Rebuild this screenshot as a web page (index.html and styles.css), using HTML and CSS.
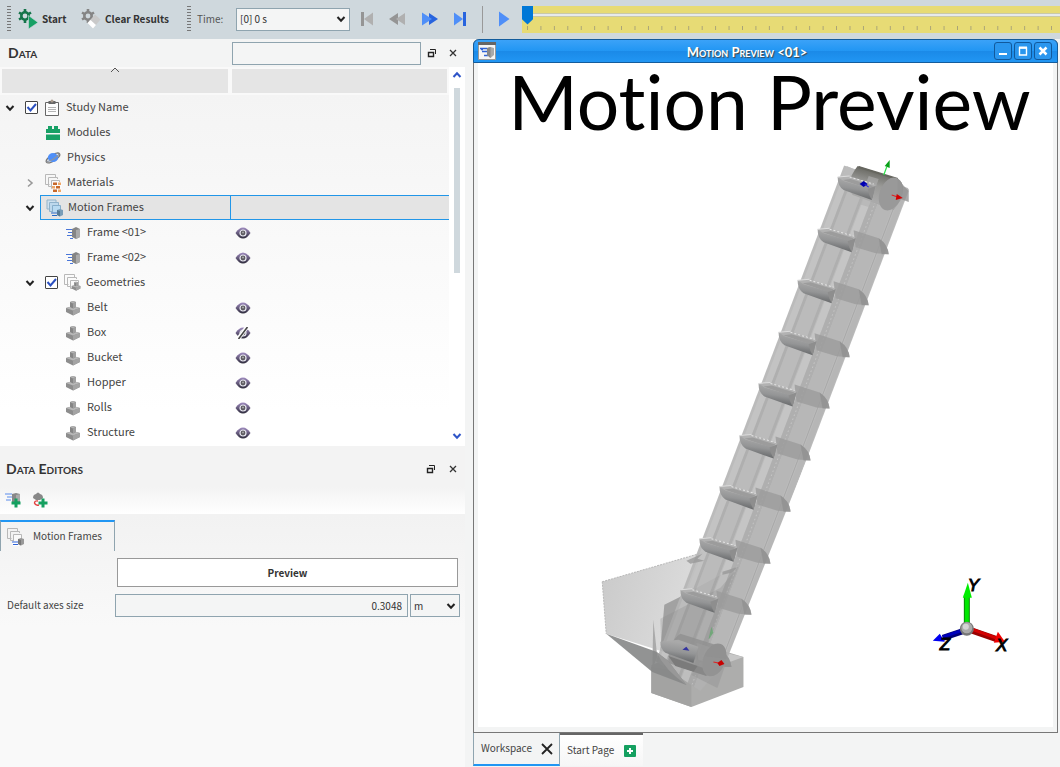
FILE: index.html
```html
<!DOCTYPE html>
<html lang="en">
<head>
<meta charset="utf-8">
<title>Motion Preview</title>
<link rel="stylesheet" href="styles.css">
</head>
<body>
<svg class="defs" aria-hidden="true">
  <defs>
    <linearGradient id="g-eye" x1="0" y1="0" x2="0" y2="1"><stop offset="0" stop-color="#a08cc0"/><stop offset="1" stop-color="#2e2c3c"/></linearGradient>
    <symbol id="i-eye" viewBox="0 0 16 12"><path d="M.500 6Q4 .500 8 .500T15.500 6Q12 11.500 8 11.500T.500 6Z" fill="url(#g-eye)"/><circle cx="8" cy="6" r="3" fill="#5c5a60" stroke="#e8e8f0" stroke-width="1.200"/><circle cx="8" cy="5.500" r="1" fill="#aaa"/></symbol>
    <symbol id="i-eye-off" viewBox="0 0 16 12"><path d="M.500 6Q4 .500 8 .500T15.500 6Q12 11.500 8 11.500T.500 6Z" fill="url(#g-eye)"/><circle cx="8" cy="6" r="3" fill="#5c5a60" stroke="#e8e8f0" stroke-width="1.200"/><path d="M3 12L12 0" stroke="#fff" stroke-width="4"/><path d="M3.500 12L12.500 0" stroke="#444" stroke-width="1.600"/></symbol>
    <symbol id="i-down" viewBox="0 0 10 8"><path d="M1.500 2L5 5.800L8.500 2" fill="none" stroke="currentColor" stroke-width="2"/></symbol>
    <symbol id="i-right" viewBox="0 0 8 10"><path d="M2 1.500L6 5L2 8.500" fill="none" stroke="#999" stroke-width="1.600"/></symbol>
    <symbol id="i-part" viewBox="0 0 16 16"><path d="M1 8L8 6L15 8V12L8 15.500L1 12Z" fill="#8d8d8d"/><path d="M1 8L8 6L15 8L8 10.500Z" fill="#b8b8b8"/><path d="M8 10.500L15 8V12L8 15.500Z" fill="#a4a4a4"/><path d="M5 2L8 1L11 2V7L8 8.500L5 7Z" fill="#858585"/><path d="M5 2L8 1L11 2L8 3.500Z" fill="#b2b2b2"/><path d="M8 3.500L11 2V7L8 8.500Z" fill="#a0a0a0"/></symbol>
    <symbol id="i-frame" viewBox="0 0 16 14"><path d="M1 3.500H7M3 6.500H7M2 9.500H7M5 12.500H8" stroke="#4a76d8" stroke-width="1.200"/><path d="M7 3L11 1L15 3V11L11 13L7 11Z" fill="#858585"/><path d="M11 4L15 3V11L11 13Z" fill="#aaa"/></symbol>
    <symbol id="i-stack" viewBox="0 0 18 18"><path d="M4.500 10.500H.500V.500H10.500V3M7.500 12.500H3.500V3.500H12.500V5" fill="none" stroke="#b8b8b8"/><path d="M6.500 14.500V6.500H14.500V14.500Z" fill="#fafafa" stroke="#b8b8b8"/></symbol>
    <symbol id="i-motion" viewBox="0 0 18 18"><use href="#i-stack" width="18" height="18"/><path d="M5 14.500H12M6 17H12" stroke="#fff" stroke-width="2.500"/><path d="M5 14H11M6 16.500H11" stroke="#2f63d8" stroke-width="1.200"/><path d="M11 11L14 10L17 11V16L14 17.500L11 16Z" fill="#999"/><path d="M11 11L14 12V17.500L11 16Z" fill="#777"/></symbol>
    <symbol id="i-motion-sel" viewBox="0 0 18 18"><path d="M1 1H10V10H1Z" fill="#cfe1ee" stroke="#94b4ca"/><path d="M3.500 3.500H12.500V12.500H3.500Z" fill="#bdd8ec" stroke="#8fb2cb"/><path d="M6.500 6.500H14.500V14.500H6.500Z" fill="#b8daf1" stroke="#86aecb"/><path d="M5 14.500H12M6 17H12" stroke="#e5e5e5" stroke-width="2.500"/><path d="M5 14H11M6 16.500H11" stroke="#2469c8" stroke-width="1.200"/><path d="M11 11L14 10L17 11V16L14 17.500L11 16Z" fill="#789db8"/><path d="M11 11L14 12V17.500L11 16Z" fill="#547a96"/></symbol>
    <symbol id="i-float" viewBox="0 0 10 10"><path d="M1.500 4.500H6.500V8.500H1.500Z" fill="none" stroke="#222" stroke-width="1.400"/><path d="M3 1.500H8.500V6" fill="none" stroke="#222"/></symbol>
    <symbol id="i-close" viewBox="0 0 10 10"><path d="M2 2L8 8M8 2L2 8" stroke="#333" stroke-width="1.300"/></symbol>
    <symbol id="i-plus" viewBox="0 0 10 10"><path d="M5 .500V9.500M.500 5H9.500" stroke="#15a060" stroke-width="3"/></symbol>
    <symbol id="i-gear" viewBox="0 0 14 14"><circle cx="7" cy="7" r="3.700" fill="none" stroke="currentColor" stroke-width="2.600"/><path d="M7 0V3M7 11V14M1 3.500L3.500 5M10.500 9L13 10.500M1 10.500L3.500 9M10.500 5L13 3.500" stroke="currentColor" stroke-width="2.600"/></symbol>
  </defs>
</svg>

<header class="toolbar">
  <span class="grip"></span>
  <button class="tool tool-start" type="button">
    <svg width="20" height="20" viewBox="0 0 20 20"><use href="#i-gear" width="14" height="14" color="#15744a"/><path d="M10.500 6.500L20 13.500L10.500 20Z" fill="#17a065" stroke="#cfd8dd" stroke-width=".600"/></svg>
    Start
  </button>
  <button class="tool tool-clear" type="button">
    <svg width="20" height="20" viewBox="0 0 20 20"><use href="#i-gear" width="14" height="14" color="#858585"/><path d="M6.500 14L14 5.500L19.500 10.500L12 19.500Z" fill="#c9c9c9"/><path d="M6.500 14L9.500 11L15 16L12 19.500Z" fill="#fff"/></svg>
    Clear Results
  </button>
  <span class="grip"></span>
  <label class="time-label" for="time">Time:</label>
  <select class="field time-select" id="time"><option>[0] 0 s</option></select>
  <div class="transport">
    <button class="bare" type="button" aria-label="First"><svg width="14" height="16" viewBox="0 0 14 16"><path d="M1 1H4V15H1Z" fill="#959595"/><path d="M13 1.500V14.500L4 8Z" fill="#b0b0b0"/></svg></button>
    <button class="bare" type="button" aria-label="Back"><svg width="18" height="16" viewBox="0 0 18 16"><path d="M10 2V14L1 8Z" fill="#959595"/><path d="M17 2V14L8 8Z" fill="#b0b0b0"/></svg></button>
    <button class="bare" type="button" aria-label="Forward"><svg width="18" height="16" viewBox="0 0 18 16"><path d="M8 2V14L17 8Z" fill="#2864de"/><path d="M1 1.500V14.500L11 8Z" fill="#4f8ff8"/></svg></button>
    <button class="bare" type="button" aria-label="Last"><svg width="14" height="16" viewBox="0 0 14 16"><path d="M10 1H13V15H10Z" fill="#2864de"/><path d="M1 1.500V14.500L10 8Z" fill="#4f8ff8"/></svg></button>
  </div>
  <span class="rule"></span>
  <button class="bare play" type="button" aria-label="Play"><svg width="12" height="16" viewBox="0 0 12 16"><path d="M1 .500V15.500L11.500 8Z" fill="#4f8ff8"/></svg></button>
  <input class="timeline" type="range" min="0" max="40" value="0" aria-label="Timeline">
</header>

<div class="body">
  <aside class="side">
    <section class="data">
      <div class="panel-head">
        <h2 class="panel-title">Data</h2>
        <input class="field search" type="text" aria-label="Filter data">
        <button class="bare" type="button" aria-label="Float"><svg width="10" height="10"><use href="#i-float"/></svg></button>
        <button class="bare" type="button" aria-label="Close"><svg width="10" height="10"><use href="#i-close"/></svg></button>
      </div>
      <div class="tree-wrap">
        <div class="tree-main">
          <div class="columns"><span class="col"><svg class="sort" width="10" height="6" viewBox="0 0 10 6"><path d="M1 5L5 1L9 5" fill="none" stroke="#555"/></svg></span><span class="col"></span></div>
          <ul class="tree">
            <li class="row"><button class="bare twist" type="button" aria-label="Collapse"><svg width="10" height="8"><use href="#i-down"/></svg></button><input class="check" type="checkbox" id="c1" checked><svg class="ico" width="16" height="18" viewBox="0 0 16 18"><path d="M1.500 3.500H14.500V16.500H1.500Z" fill="#fdfdfd" stroke="#666"/><path d="M4.500 2H11.500V5H4.500Z" fill="#666"/><circle cx="8" cy="2" r="1.500" fill="#a99a8c"/><path d="M4 8.500H12M4 10.500H12M4 12.500H12" stroke="#b4b4b4"/></svg><label class="text" for="c1">Study Name</label></li>
            <li class="row d1"><svg class="ico" width="16" height="16" viewBox="0 0 16 16"><path d="M3 1H7V4H9V1H13V4H15V8H1V4H3ZM1 9.500H15V15H1Z" fill="#17a065"/></svg><span class="text">Modules</span></li>
            <li class="row d1"><svg class="ico" width="16" height="14" viewBox="0 0 17 14"><ellipse cx="8.500" cy="7" rx="8.300" ry="3.200" transform="rotate(-33 8.500 7)" fill="none" stroke="#777" stroke-width="1.300"/><ellipse cx="8.500" cy="6.500" rx="5.500" ry="4.700" fill="#4f8ff8"/><path d="M2 10.500Q7 11 15 3" fill="none" stroke="#8a94a4" stroke-width="1.200"/></svg><span class="text">Physics</span></li>
            <li class="row d1x"><button class="bare twist" type="button" aria-label="Expand"><svg width="8" height="10"><use href="#i-right"/></svg></button><svg class="ico" width="18" height="18" viewBox="0 0 18 18"><use href="#i-stack" width="18" height="18"/><path d="M7 8H17V18H7Z" fill="#fafafa"/><path d="M8 8.500H12V11H8ZM8 15.500H12V18H8ZM11 12H15V14.500H11Z" fill="#c8682a"/><path d="M13 8.500H16V11H13ZM7 12H10V14.500H7ZM13 15.500H16V18H13Z" fill="#f0a868"/></svg><span class="text">Materials</span></li>
            <li class="row d1x selected"><button class="bare twist" type="button" aria-label="Collapse"><svg width="10" height="8"><use href="#i-down"/></svg></button><span class="pick"><svg class="ico" width="18" height="18"><use href="#i-motion-sel"/></svg><span class="text">Motion Frames</span></span></li>
            <li class="row d2"><svg class="ico" width="16" height="14"><use href="#i-frame"/></svg><span class="text name">Frame &lt;01&gt;</span><button class="bare" type="button" aria-label="Hide"><svg width="16" height="12"><use href="#i-eye"/></svg></button></li>
            <li class="row d2"><svg class="ico" width="16" height="14"><use href="#i-frame"/></svg><span class="text name">Frame &lt;02&gt;</span><button class="bare" type="button" aria-label="Hide"><svg width="16" height="12"><use href="#i-eye"/></svg></button></li>
            <li class="row d1x"><button class="bare twist" type="button" aria-label="Collapse"><svg width="10" height="8"><use href="#i-down"/></svg></button><input class="check" type="checkbox" id="c2" checked><svg class="ico" width="18" height="18" viewBox="0 0 18 18"><use href="#i-stack" width="18" height="18"/><use href="#i-part" x="7" y="7" width="10" height="10"/></svg><label class="text" for="c2">Geometries</label></li>
            <li class="row d2"><svg class="ico" width="16" height="16"><use href="#i-part"/></svg><span class="text name">Belt</span><button class="bare" type="button" aria-label="Hide"><svg width="16" height="12"><use href="#i-eye"/></svg></button></li>
            <li class="row d2"><svg class="ico" width="16" height="16"><use href="#i-part"/></svg><span class="text name">Box</span><button class="bare" type="button" aria-label="Show"><svg width="16" height="12"><use href="#i-eye-off"/></svg></button></li>
            <li class="row d2"><svg class="ico" width="16" height="16"><use href="#i-part"/></svg><span class="text name">Bucket</span><button class="bare" type="button" aria-label="Hide"><svg width="16" height="12"><use href="#i-eye"/></svg></button></li>
            <li class="row d2"><svg class="ico" width="16" height="16"><use href="#i-part"/></svg><span class="text name">Hopper</span><button class="bare" type="button" aria-label="Hide"><svg width="16" height="12"><use href="#i-eye"/></svg></button></li>
            <li class="row d2"><svg class="ico" width="16" height="16"><use href="#i-part"/></svg><span class="text name">Rolls</span><button class="bare" type="button" aria-label="Hide"><svg width="16" height="12"><use href="#i-eye"/></svg></button></li>
            <li class="row d2"><svg class="ico" width="16" height="16"><use href="#i-part"/></svg><span class="text name">Structure</span><button class="bare" type="button" aria-label="Hide"><svg width="16" height="12"><use href="#i-eye"/></svg></button></li>
          </ul>
        </div>
        <div class="scroll">
          <svg class="flip" width="10" height="8"><use href="#i-down"/></svg>
          <div class="scroll-track"><div class="scroll-thumb"></div></div>
          <svg width="10" height="8"><use href="#i-down"/></svg>
        </div>
      </div>
    </section>

    <section class="editors">
      <div class="editors-top">
        <div class="panel-head">
          <h2 class="panel-title">Data Editors</h2>
          <button class="bare" type="button" aria-label="Float"><svg width="10" height="10"><use href="#i-float"/></svg></button>
          <button class="bare" type="button" aria-label="Close"><svg width="10" height="10"><use href="#i-close"/></svg></button>
        </div>
        <div class="editor-tools">
          <button class="bare" type="button" aria-label="Add frame"><svg width="16" height="16" viewBox="0 0 16 16"><path d="M0 2H7M2 5H7M1 8H6" stroke="#8fb0f0" stroke-width="1.600"/><path d="M7 2L11 1L15 2V10H7Z" fill="#888"/><path d="M11 3L15 2V9H11Z" fill="#aaa"/><use href="#i-plus" x="6" y="6" width="10" height="10"/></svg></button>
          <button class="bare" type="button" aria-label="Add motion"><svg width="16" height="16" viewBox="0 0 16 16"><path d="M1 6Q1 2.500 4 2Q6 -1 8 2Q11 2.500 11 6L8 8H4Z" fill="#888"/><path d="M6 9Q2.500 8.500 2.500 11Q3.500 14 7 13" fill="none" stroke="#e24040" stroke-width="1.400"/><use href="#i-plus" x="6" y="6" width="10" height="10"/></svg></button>
        </div>
      </div>
      <div class="editor-tab"><svg width="18" height="18"><use href="#i-motion"/></svg><span class="text">Motion Frames</span></div>
      <form class="form">
        <button class="preview" type="button">Preview</button>
        <label class="text axes-label" for="axes">Default axes size</label>
        <input class="field axes" id="axes" type="text" value="0.3048">
        <select class="field unit" aria-label="Unit"><option>m</option></select>
      </form>
    </section>
  </aside>

  <main class="work">
    <section class="window">
      <div class="titlebar">
        <svg width="18" height="18" viewBox="0 0 18 18"><path d="M.500 .500H17.500V17.500H.500Z" fill="#f6f6f6" stroke="#999"/><path d="M0 0H18V3H0Z" fill="#666"/><path d="M2 6.500H9M4 9.500H9M3 7.500H5M6 13.500H10" stroke="#2f63d8" stroke-width="1.300"/><path d="M9 6L12.500 5L16 6V13L12.500 16L9 13Z" fill="#aaa"/><path d="M9 6L12.500 5V16L9 13Z" fill="#888"/></svg>
        <h1 class="window-title">Motion Preview &lt;01&gt;</h1>
        <div class="window-buttons">
          <button type="button" aria-label="Minimize"><svg width="16" height="16"><path d="M4 11H12" stroke="#fff" stroke-width="2"/></svg></button>
          <button type="button" aria-label="Maximize"><svg width="16" height="16"><path d="M4.500 5H11.500V12H4.500Z" fill="none" stroke="#fff" stroke-width="1.400"/><path d="M4 4.500H12" stroke="#fff" stroke-width="2"/></svg></button>
          <button type="button" aria-label="Close"><svg width="16" height="16"><path d="M4.500 4.500L11.500 11.500M11.500 4.500L4.500 11.500" stroke="#fff" stroke-width="2.500"/></svg></button>
        </div>
      </div>
      <div class="view">
        <p class="caption">Motion Preview</p>
        <svg class="scene" viewBox="478 144 574 582" role="img" aria-label="Bucket elevator model">
          <defs>
            <linearGradient id="g-bucket" x1=".42" y1=".1" x2=".22" y2=".95"><stop offset="0" stop-color="#a9a9a9"/><stop offset=".45" stop-color="#949596"/><stop offset="1" stop-color="#5c5e60"/></linearGradient>
            <linearGradient id="g-roll" x1=".3" y1="0" x2="0" y2="1"><stop offset="0" stop-color="#62625b"/><stop offset=".35" stop-color="#9a9a98"/><stop offset=".7" stop-color="#aaa"/><stop offset="1" stop-color="#848484"/></linearGradient>
            <linearGradient id="g-hopper" x1="0" y1=".3" x2="1" y2=".6"><stop offset="0" stop-color="#cbcbcb"/><stop offset="1" stop-color="#dedede"/></linearGradient>
            <clipPath id="belt-clip"><path d="M842 165L907 188L912 195L727 657L700 690L655 660L661 640Z"/></clipPath>
            <g id="bucket-back"><path d="M36 1L61 9Q70 15 71 25L58 24L38 18Z" fill="#9b9b9b" opacity=".8"/><path d="M61 9Q70 15 71 25L64 25Z" fill="#8e8e8e" opacity=".7"/></g>
            <g id="bucket">
              <path d="M0 0L12 -1L38 8L30 13L5 5Z" fill="#b2b2b2"/><path d="M5 3L31 12L36 9L13 2Z" fill="#9c9c9c"/>
              <path d="M0 0L6 4L30 11L38 9L34 23L6 13Q0 9 0 0Z" fill="url(#g-bucket)"/>
              <path d="M30 12L38 9L34 23Q31 18 30 12Z" fill="#8e8e8e"/>
              <path d="M0 0L12 -1" stroke="#ddd"/><path d="M12 0L36 7" stroke="#e6e6e6" stroke-dasharray="2 2"/>
            </g>
          </defs>
          <path d="M602 581L702 552L663 651L606 633Z" fill="url(#g-hopper)"/>
          <path d="M602 581L702 552M602 581L606 633" stroke="#b8b8b8" stroke-dasharray="2 1" fill="none"/>
          <path d="M651 664L706 645L743 656V686L691 706L651 692Z" fill="#adadac"/>
          <path d="M651 666L691 672V706L651 692Z" fill="#a3a3a2"/>
          <path d="M702 650L725 652L743 656L724 663L700 659Z" fill="#c7c7c7"/>
          <path d="M664 604L680 596L735 566L701 660L660 650Z" fill="#a2a2a2"/>
          <path d="M653 619L657 656L652 668Z" fill="#aaa"/>
          <g clip-path="url(#belt-clip)">
            <g transform="matrix(1 0 -.38 1 68.400 0)" opacity=".92">
              <rect x="838" y="150" width="74" height="540" fill="#b6b6b6"/>
              <rect x="841" y="150" width="7" height="540" fill="#bebebe"/>
              <rect x="848" y="150" width="3" height="540" fill="#a9a9a9"/>
              <rect x="866" y="150" width="3" height="540" fill="#a9a9a9"/>
              <rect x="870" y="150" width="8" height="540" fill="#c0c0c0"/>
              <rect x="878" y="150" width="8" height="540" fill="#a9a9a9"/>
              <path d="M883 150V690" stroke="#c0c0c0" stroke-dasharray="1.500 2.500"/>
              <rect x="886" y="150" width="16" height="540" fill="#b1b1b1"/>
              <path d="M903.500 150V690" stroke="#a0a0a0"/>
              <rect x="905" y="150" width="6" height="540" fill="#b0b0b0"/>
            </g>
          </g>
          <path d="M660 618L720 587L738 566L701 660L661 647Z" fill="#8c8c8c" opacity=".3"/>
          <path d="M686 560L702 553L697 558L704 560L690 563ZM722 571L738 566L731 572L722 574Z" fill="#999" opacity=".8"/>
          <path d="M842 178L846 166L858 171L853 181Z" fill="#bcbcbc"/>
          <path d="M857 166L897 179Q906 184 900 200L893 210L852 195Q843 184 857 166Z" fill="url(#g-roll)"/>
          <path d="M858 167L897 179" stroke="#66665f" stroke-width="2"/>
          <ellipse cx="890" cy="194" rx="11" ry="17" transform="rotate(20 890 194)" fill="#999"/>
          <path d="M878 179L868 207L858 204L868 176Z" fill="#b0b0b0" opacity=".6"/>
          <path d="M897 179L905 188L908 191V202L897 198Z" fill="#949494" opacity=".8"/>
          <path d="M680 633L718 645L707 675L668 662Q668 641 680 633Z" fill="#909090" opacity=".85"/>
          <use href="#bucket-back" x="817" y="229"/><use href="#bucket-back" x="797" y="280"/><use href="#bucket-back" x="778" y="332"/><use href="#bucket-back" x="758" y="383"/><use href="#bucket-back" x="739" y="435"/><use href="#bucket-back" x="719" y="486"/><use href="#bucket-back" x="699" y="538"/><use href="#bucket-back" x="680" y="589"/><use href="#bucket-back" x="660" y="641"/>
          <use href="#bucket" x="837" y="177"/><use href="#bucket" x="817" y="229"/><use href="#bucket" x="797" y="280"/><use href="#bucket" x="778" y="332"/><use href="#bucket" x="758" y="383"/><use href="#bucket" x="739" y="435"/><use href="#bucket" x="719" y="486"/><use href="#bucket" x="699" y="538"/><use href="#bucket" x="680" y="589"/>
          <path d="M668 655L706 668V675L675 665Z" fill="#7b7b7b"/>
          <path d="M660 641L678 639L698 646L693 662L665 652Q660 648 660 641Z" fill="url(#g-bucket)"/>
          <ellipse cx="714" cy="659" rx="11" ry="17" transform="rotate(22 714 659)" fill="#919191"/>
          <path d="M691 674L717 687L727 658L704 655Z" fill="#969696" opacity=".5"/>
          <path d="M606 633L656 651L668 660L686 684L652 671Z" fill="#868787" opacity=".9"/>
          <path d="M656 651L668 660L686 684Q665 670 656 651Z" fill="#989898"/>
          <path d="M883 175L886 167" stroke="#2de04a" stroke-width="1.200"/><path d="M884 166L889 160V168Z" fill="#08a018"/>
          <path d="M891 195L897 197" stroke="#d22"/><path d="M896 194L902 198L895 200Z" fill="#d20000"/>
          <path d="M859 184L863 181L867 184L863 187Z" fill="#0000b0"/><path d="M864 184L868 187" stroke="#22d"/>
          <path d="M708 639L711 626L713 632Z" fill="#5da868" opacity=".7"/><path d="M682 649L686 646L689 650Z" fill="#3333a0"/>
          <path d="M713 661L718 662" stroke="#d22"/><path d="M717 662L721 659L724 663L719 665Z" fill="#c80000"/>
          <path d="M966 625V594" stroke="#078a07" stroke-width="6"/><path d="M966 625V594" stroke="#00e800" stroke-width="4"/><path d="M962 597L967 582L971 597Z" fill="#00ed00"/>
          <path d="M969 629L995 638" stroke="#900" stroke-width="6"/><path d="M970 628L995 637" stroke="#d40000" stroke-width="3"/><path d="M993 642L997 631L1004 641Z" fill="#f00000"/>
          <path d="M963 630L942 637" stroke="#000078" stroke-width="6"/><path d="M963 629L942 636" stroke="#0000bc" stroke-width="3"/><path d="M932 640L939 633L944 641Z" fill="#0000f0"/>
          <circle cx="966" cy="628" r="7" fill="#777"/><circle cx="966" cy="627" r="5.500" fill="#aaa"/><circle cx="965" cy="626" r="3" fill="#d4d4d4"/>
          <g class="axis-text"><text x="967" y="590">Y</text><text x="939" y="649">Z</text><text x="995" y="650">X</text></g>
        </svg>
      </div>
    </section>
    <nav class="tabs">
      <div class="tab active"><a class="text" href="#workspace">Workspace</a><button class="bare" type="button" aria-label="Close tab"><svg width="14" height="14" viewBox="0 0 14 14"><path d="M2 2L12 12M12 2L2 12" stroke="#222" stroke-width="1.800"/></svg></button></div>
      <div class="tab start"><a class="text" href="#start">Start Page</a><button class="bare" type="button" aria-label="New tab"><svg width="12" height="12" viewBox="0 0 12 12"><rect width="12" height="12" rx="1" fill="#15a060"/><path d="M6 3V9M3 6H9" stroke="#fff" stroke-width="2"/></svg></button></div>
    </nav>
  </main>
</div>
</body>
</html>
```
FILE: styles.css
```css
* { box-sizing: border-box; }
body {
  margin: 0;
  min-height: 100vh;
  display: flex;
  flex-direction: column;
  background: #f3f4f4;
  color: #444;
  font: 10px/16px "Noto Sans CJK SC", "Noto Sans", sans-serif;
}
svg { display: block; flex: none; }
button, input, select { font: inherit; color: inherit; margin: 0; }
.defs { position: absolute; width: 0; height: 0; }
.bare { border: 0; padding: 0; background: none; display: flex; align-items: center; justify-content: center; }
.text { padding-bottom: 2px; }
.field { border: 1px solid #8fa4af; background: #f4f5f5; border-radius: 0; color: #333; }
select.field {
  appearance: none;
  padding: 0 3px;
  background: #f4f5f5 url("data:image/svg+xml,%3Csvg xmlns='http://www.w3.org/2000/svg' width='10' height='8'%3E%3Cpath d='M1.500 2L5 5.800L8.500 2' fill='none' stroke='%23222' stroke-width='2'/%3E%3C/svg%3E") no-repeat right 3px center;
}

.toolbar { display: flex; align-items: center; height: 39px; background: #cfd8dd; padding: 0 0 1px 7px; }
.grip { width: 4px; height: 26px; background: repeating-linear-gradient(#777 0 1px, transparent 1px 3px); }
.tool { display: flex; align-items: center; gap: 4px; border: 0; background: none; padding: 0; font-weight: 700; color: #333; white-space: nowrap; }
.tool-start { margin-left: 7px; width: 63px; }
.tool-clear { width: 106px; }
.time-label { margin-left: 6px; width: 39px; color: #555; }
.time-select { width: 114px; height: 23px; }
.transport { display: flex; margin-left: 10px; width: 107px; justify-content: space-between; }
.rule { width: 1px; height: 27px; background: #999; margin: 0 15px; }
.play { margin-right: 12px; }
.timeline {
  appearance: none;
  flex: 1;
  min-width: 0;
  height: 27px;
  background:
    linear-gradient(#e7eaec, #e7eaec) 0 8px / 100% 2px no-repeat,
    linear-gradient(#c9c9a8, #c9c9a8) 0 7px / 100% 4px no-repeat,
    linear-gradient(90deg, #a8a377 1px, transparent 1px) 5px 20px / calc(100% / 40) 4px repeat-x,
    #e7db75;
}
.timeline::-webkit-slider-runnable-track { height: 27px; }
.timeline::-webkit-slider-thumb { appearance: none; width: 11px; height: 19px; background: #0078d7; clip-path: polygon(0 0, 100% 0, 100% 72%, 50% 100%, 0 72%); }

.body { flex: 1; display: flex; }
.side { width: 465px; flex: none; display: flex; flex-direction: column; }
.panel-head { display: flex; align-items: center; }
.panel-head .bare { width: 10px; height: 16px; margin-left: 11px; }
.panel-title { margin: 0; flex: 1; font: 700 14px/16px Lato, sans-serif; font-variant: small-caps; color: #333; }
.data .panel-head { height: 28px; padding: 0 7px 0 8px; }
.search { width: 189px; height: 23px; margin-right: -6px; }
.data .search + .bare { margin-left: 12px; }
.tree-wrap { display: flex; background: #fff; }
.tree-main { flex: 1; }
.columns { display: grid; grid-template-columns: 226px 1fr; gap: 4px; padding: 2px; background: #f9f9f9; }
.col { height: 24px; background: #e5e5e5; display: flex; justify-content: center; }
.sort { margin-top: -2px; }
.tree { list-style: none; margin: 0; padding: 0 0 1px; font-size: 11px; background: linear-gradient(#f4f4f4, #fff 90%); }
.tree .text { padding-bottom: 3px; }
.row { display: flex; align-items: center; height: 25px; padding-left: 5px; white-space: nowrap; }
.twist { width: 10px; margin-right: 10px; color: #222; }
.check { appearance: none; width: 13px; height: 13px; border: 1px solid #444; border-radius: 1px; margin-right: 6px; background: #fff url("data:image/svg+xml,%3Csvg xmlns='http://www.w3.org/2000/svg' width='11' height='11'%3E%3Cpath d='M1.500 5L4.500 8.500L10 2' fill='none' stroke='%232b50c0' stroke-width='2'/%3E%3C/svg%3E") no-repeat center; }
.ico { margin-right: 6px; }
.d1 { padding-left: 45px; }
.d1x { padding-left: 25px; }
.d2 { padding-left: 65px; }
.name { width: 148px; }
.selected .twist { margin-right: 5px; }
.d1x:not(.selected) .ico { margin-right: 4px; }
.pick { flex: 1; height: 25px; display: flex; align-items: center; padding-left: 5px; color: #444; border: 1px solid #2196e8; border-right: 0; background: linear-gradient(#2196e8, #2196e8) 189px 0 / 1px 100% no-repeat #e4e4e4; }
.pick .ico { margin-right: 4px; }
.scroll { width: 16px; display: flex; flex-direction: column; align-items: center; padding: 4px 0 6px; color: #2f55c8; }
.flip { transform: rotate(180deg); }
.scroll-track { flex: 1; padding-top: 9px; }
.scroll-thumb { width: 6px; height: 185px; background: #cfd8dd; }

.editors { flex: 1; display: flex; flex-direction: column; background: linear-gradient(#f2f2f2 70px, #f9f9f9 180px, #f9f9f9); }
.editors-top { background: linear-gradient(#f3f3f3 60%, #fff); height: 68px; }
.editors .panel-head { height: 46px; padding: 0 7px 0 6px; }
.editors .panel-head .bare + .bare { margin-left: 12px; }
.editor-tools { display: flex; gap: 11px; padding-left: 5px; }
.editor-tab { display: flex; align-items: center; gap: 8px; width: 115px; height: 31px; margin-top: 6px; padding-left: 6px; border: 1px solid #8fa4af; border-top: 2px solid #2196f3; border-bottom: 0; white-space: nowrap; }
.form { display: grid; grid-template-columns: 106px 1fr 50px; column-gap: 2px; row-gap: 7px; padding: 7px 5px 0 7px; align-items: center; }
.form > * { min-width: 0; }
.preview { grid-column: 2 / 4; margin: 0 2px; height: 29px; border: 1px solid #999; background: #fff; font-weight: 700; color: #333; }
.axes-label { white-space: nowrap; }
.axes { height: 23px; text-align: right; padding: 0 5px; }
.unit { height: 23px; }

.work { flex: 1; min-width: 0; display: flex; flex-direction: column; padding-left: 8px; }
.window { flex: 1; display: flex; flex-direction: column; margin-right: 2px; border: 1px solid #777; border-top: 0; border-radius: 6px 6px 0 0; }
.titlebar { display: flex; align-items: center; height: 24px; margin: 0 -1px; padding: 0 5px 0 4px; background: linear-gradient(#3ba2f8, #2196f3 50%, #1b8ae8 52%, #2196f3); border: 1px solid #135c9c; border-radius: 6px 6px 0 0; }
.window-title { flex: 1; margin: 0; padding: 1px 34px 0 38px; text-align: center; font: 700 13px/18px Lato, sans-serif; font-variant: small-caps; color: #fff; text-shadow: 1px 1px 1px #444; }
.window-buttons { display: flex; gap: 2px; }
.window-buttons button { width: 18px; height: 18px; padding: 0; border: 1px solid #11599c; border-radius: 3px; background: #2a96ee; }
.view { flex: 1; display: flex; flex-direction: column; margin: 0 4px 5px; background: #fff; }
.caption { margin: 0; height: 81px; padding-left: 8px; text-align: center; white-space: nowrap; color: #000; font: 400 75px/76px Lato, sans-serif; font-variant-ligatures: none; }
.scene { flex: 1; width: 100%; min-height: 0; }
.axis-text { font: italic 17px "Liberation Sans", sans-serif; fill: #000; stroke: #000; }
.tabs { display: flex; align-items: flex-start; height: 34px; }
.tab { display: flex; align-items: center; justify-content: space-between; white-space: nowrap; }
.tab a { color: #444; text-decoration: none; }
.active { width: 87px; height: 33px; padding: 0 5px 0 7px; border: 1px solid #8fa4af; border-top: 0; border-bottom: 2px solid #2196f3; }
.start { width: 83px; height: 33px; padding: 0 7px; border-top: 2px solid #666; background: linear-gradient(#fff, #f6f6f6); }
```
